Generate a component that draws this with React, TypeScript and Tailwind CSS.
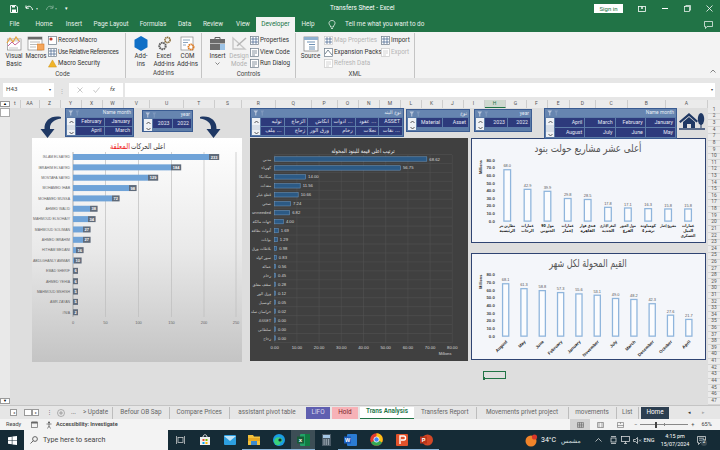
import React from "react";

const F = "font-['Roboto','Noto_Sans',sans-serif]";
const AR = "'DejaVu Sans','Noto Sans',sans-serif";

function Word({ w, children, cls = "" }: { w: number; children?: React.ReactNode; cls?: string }) {
  return (
    <div style={{ width: w }} className={"flex shrink-0 items-center justify-center whitespace-nowrap " + cls}>
      {children}
    </div>
  );
}

/* ---------- small ribbon glyphs ---------- */
function VisualBasicIcon() {
  return (
    <svg width="16" height="15" viewBox="0 0 16 15">
      <rect x="1.5" y="3" width="13.5" height="11" fill="#fff" stroke="#8a8a8a" strokeWidth=".7" />
      <rect x="1.5" y="3" width="13.5" height="2.5" fill="#d9d9d9" />
      <path d="M1 7 L4 2 L7 6 L10 1 L13 5" fill="none" stroke="#e8a33d" strokeWidth="1.2" />
      <path d="M2 10 L6 6 L9 9 L14 5" fill="none" stroke="#c86a9a" strokeWidth="1" />
      <path d="M3 12h9" stroke="#b9b9b9" strokeWidth=".8" />
    </svg>
  );
}
function MacrosIcon() {
  return (
    <svg width="18" height="15" viewBox="0 0 18 15">
      <rect x="1" y="1" width="14" height="13" fill="#fff" stroke="#8a8a8a" strokeWidth=".7" />
      <rect x="1" y="1" width="14" height="2.5" fill="#6a6a6a" />
      <path d="M3 6h10M3 8.5h7M3 11h6" stroke="#a9a9a9" strokeWidth=".8" />
      <rect x="10.5" y="8" width="6.5" height="6" fill="#f5a65b" stroke="#d77a24" strokeWidth=".6" />
    </svg>
  );
}
function GearsIcon() {
  return (
    <svg width="15" height="15" viewBox="0 0 15 15">
      <circle cx="10.5" cy="4" r="2.6" fill="none" stroke="#8a6d3a" strokeWidth="1.6" strokeDasharray="1.4 .5" />
      <circle cx="5.5" cy="10" r="3.2" fill="none" stroke="#5f5f5f" strokeWidth="2" strokeDasharray="1.6 .6" />
    </svg>
  );
}
function ComIcon() {
  return (
    <svg width="16" height="16" viewBox="0 0 16 16">
      <rect x="1" y="1" width="12" height="13" fill="#fff" stroke="#8a8a8a" strokeWidth=".7" />
      <path d="M3 4h7M3 6.5h5M3 9h3" stroke="#6f8fb0" strokeWidth=".8" />
      <circle cx="11" cy="11" r="2.6" fill="none" stroke="#e07a1f" strokeWidth="1.8" strokeDasharray="1.4 .5" />
    </svg>
  );
}
function ToolboxIcon() {
  return (
    <svg width="17" height="15" viewBox="0 0 17 15">
      <path d="M6 3V1.5h5V3" fill="none" stroke="#5f5f5f" />
      <rect x="1" y="3" width="15" height="11" fill="#6a6a6a" />
      <rect x="1" y="7" width="15" height="1" fill="#b9b9b9" />
      <rect x="11" y="8" width="5" height="6" fill="#9cc3e6" />
    </svg>
  );
}
function DesignIcon() {
  return (
    <svg width="17" height="15" viewBox="0 0 17 15">
      <path d="M2 13 L2 2 L14 13 Z" fill="none" stroke="#c7c7c7" strokeWidth="1.4" />
      <path d="M6 10 L15 2" stroke="#b5b5b5" strokeWidth="1.5" />
    </svg>
  );
}
function SourceIcon() {
  return (
    <svg width="18" height="16" viewBox="0 0 18 16">
      <rect x="2" y="1" width="14" height="14" fill="#fff" stroke="#7a7a7a" strokeWidth=".7" />
      <rect x="2" y="1" width="14" height="3" fill="#8fb0d0" />
      <path d="M5 6h8M7 8.5h6M7 11h6M7 13h6" stroke="#5f86ad" strokeWidth=".9" />
    </svg>
  );
}
function Mini({ kind, dim }: { kind: number; dim?: boolean }) {
  const stroke = dim ? "#c9c9c9" : "#6b7a88";
  return (
    <svg width="9" height="9" viewBox="0 0 9 9" className="shrink-0">
      <rect x=".5" y=".5" width="8" height="8" fill="#fff" stroke={stroke} strokeWidth=".7" />
      {kind === 0 && <circle cx="3" cy="3" r="1.6" fill="#c0392b" />}
      {kind === 1 && <path d="M1 3h7M1 6h7M3 1v7M6 1v7" stroke="#3f5f8a" strokeWidth=".7" />}
      {kind === 2 && <path d="M2 3h5M2 5h5M2 7h3" stroke={stroke} strokeWidth=".8" />}
      {kind === 3 && <path d="M1 6 L4 2 L8 7" fill="none" stroke={stroke} strokeWidth=".9" />}
    </svg>
  );
}
function MiniRow({ k, t, dim, cls = "" }: { k: number; t: string; dim?: boolean; cls?: string }) {
  return (
    <div className={"flex h-[11.5px] items-center gap-[1px] whitespace-nowrap " + (dim ? "text-[#b5b5b5] " : "") + cls}>
      {k === 9 ? (
        <svg width="9" height="9" viewBox="0 0 10 9" className="shrink-0">
          <path d="M5 .5 L9.5 8.5 H.5 Z" fill="#f0b429" stroke="#c98a12" strokeWidth=".5" />
        </svg>
      ) : (
        <Mini kind={k} dim={dim} />
      )}
      <span>{t}</span>
    </div>
  );
}
function BigBtn({ icon, a, b, w, dim, cls = "" }: { icon: React.ReactNode; a: string; b?: React.ReactNode; w: number; dim?: boolean; cls?: string }) {
  return (
    <div style={{ width: w }} className={"flex shrink-0 flex-col items-center whitespace-nowrap " + (dim ? "text-[#b0b0b0] " : "") + cls}>
      <div className="flex h-[17px] items-center">{icon}</div>
      <div className="leading-[8px]">{a}</div>
      <div className="leading-[8px]">{b}</div>
    </div>
  );
}
function Group({ w, label, children }: { w: number; label: string; children: React.ReactNode }) {
  return (
    <div style={{ width: w }} className="flex shrink-0 flex-col border-r border-[#c4c4c4]">
      <div className="flex flex-1 pt-[2px]">{children}</div>
      <div className="h-[9px] text-center leading-[9px] text-[#444]">{label}</div>
    </div>
  );
}

function Ribbon() {
  return (
    <div className="flex h-[46px] bg-[#f3f3f3] pt-[1px] text-[6.3px] text-[#333]">
      <Group w={126} label="Code">
        <BigBtn w={28} icon={<VisualBasicIcon />} a="Visual" b="Basic" />
        <BigBtn w={16} icon={<MacrosIcon />} a="Macros" />
        <div className="ml-[4px] flex flex-col">
          <MiniRow k={0} t="Record Macro" />
          <MiniRow k={1} t="Use Relative References" cls="tracking-[-0.3px]" />
          <MiniRow k={9} t="Macro Security" />
        </div>
      </Group>
      <Group w={76} label="Add-ins">
        <BigBtn
          w={26}
          cls="ml-[2px]"
          icon={
            <svg width="14" height="15" viewBox="0 0 14 15">
              <path d="M7 0 L13.5 3.7 V11.3 L7 15 L.5 11.3 V3.7 Z" fill="#0f6fc6" />
            </svg>
          }
          a="Add-"
          b="ins"
        />
        <BigBtn w={20} icon={<GearsIcon />} a="Excel" b="Add-ins" />
        <BigBtn w={21} cls="ml-[3px]" icon={<ComIcon />} a="COM" b="Add-ins" />
      </Group>
      <Group w={94} label="Controls">
        <BigBtn
          w={29}
          cls="ml-[1px]"
          icon={<ToolboxIcon />}
          a="Insert"
          b={
            <svg width="5" height="5" viewBox="0 0 5 5" className="mx-auto mt-[1px]">
              <path d="M.5 1.5 L2.5 3.5 L4.5 1.5" fill="none" stroke="#555" strokeWidth=".7" />
            </svg>
          }
        />
        <BigBtn w={14} dim icon={<DesignIcon />} a="Design" b="Mode" />
        <div className="ml-[4px] flex flex-col">
          <MiniRow k={1} t="Properties" />
          <MiniRow k={2} t="View Code" />
          <MiniRow k={2} t="Run Dialog" />
        </div>
      </Group>
      <Group w={119} label="XML">
        <BigBtn w={27} cls="ml-[1px]" icon={<SourceIcon />} a="Source" />
        <div className="flex w-[57px] flex-col">
          <MiniRow k={1} t="Map Properties" dim />
          <MiniRow k={3} t="Expansion Packs" />
          <MiniRow k={2} t="Refresh Data" dim />
        </div>
        <div className="flex flex-col">
          <MiniRow k={1} t="Import" />
          <MiniRow k={2} t="Export" dim />
        </div>
      </Group>
      <div className="flex flex-1 items-end justify-end pb-[4px] pr-[4px]">
        <svg width="6" height="5" viewBox="0 0 6 5">
          <path d="M.5 3.5 L3 1 L5.5 3.5" fill="none" stroke="#555" strokeWidth=".7" />
        </svg>
      </div>
    </div>
  );
}

/* ---------- slicer ---------- */
function Slicer({
  title,
  w,
  h,
  cols,
  rows,
  cellH = 8,
  cls = "",
  titleAr,
}: {
  title: string;
  w: number;
  h: number;
  cols: number;
  rows: string[][];
  cellH?: number;
  cls?: string;
  titleAr?: boolean;
}) {
  return (
    <div
      style={{ width: w, height: h }}
      className={"relative z-10 flex shrink-0 flex-col border border-[#3b5c92] bg-[#5c7ca8] " + cls}
    >
      <div className="flex flex-1 items-center justify-between bg-[#6685b0] px-[2px] text-[4.9px] text-[#e8edf5]">
        <svg width="13" height="6" viewBox="0 0 13 6">
          <path d="M.5 .5 H5 L3.3 3 V5.5 H2.2 V3 Z" fill="#b7c5da" />
          <path d="M7.5 .5 H11 L9.8 3 V5.5 H8.7 V3 Z" fill="#7f98bd" />
        </svg>
        <span style={titleAr ? { fontFamily: AR } : undefined}>{title}</span>
      </div>
      <div className="flex shrink-0 gap-[1px] p-[1px]">
        <div className="flex w-[8px] shrink-0 flex-col justify-between bg-[#d8dfe8]">
          <div className="flex h-[7px] items-center justify-center bg-[#eef1f5]">
            <svg width="5" height="4" viewBox="0 0 5 4">
              <path d="M.5 3 L2.5 1 L4.5 3" fill="none" stroke="#333" strokeWidth=".8" />
            </svg>
          </div>
          <div className="flex h-[5px] items-center justify-center bg-[#eef1f5]">
            <svg width="5" height="4" viewBox="0 0 5 4">
              <path d="M.5 1 L2.5 3 L4.5 1" fill="none" stroke="#333" strokeWidth=".8" />
            </svg>
          </div>
        </div>
        <div
          style={{ gridTemplateColumns: `repeat(${cols}, minmax(0, 1fr))`, gridAutoRows: cellH }}
          className="grid flex-1 content-start gap-[1px]"
        >
          {rows.flat().map((t, i) => (
            <div
              key={i}
              style={{ fontFamily: /[\u0600-\u06ff]/.test(t) ? AR : undefined }}
              className="flex min-w-0 items-center justify-end overflow-hidden whitespace-nowrap bg-[#2d3a7c] px-[2px] text-[5.2px] leading-none text-[#e4e8f4]"
            >
              {t}
            </div>
          ))}
        </div>
      </div>
    </div>
  );
}

function Arrow({ flip }: { flip?: boolean }) {
  return (
    <svg width="22" height="24" viewBox="0 0 22 24" style={flip ? { transform: "scaleX(-1)" } : undefined} className="shrink-0">
      <path d="M21 2 C12 0 4 5 4.5 14 L0.5 14 L7.5 23 L14.5 14 L10 14 C9.5 8 14 4.5 21 3.5 Z" fill="#1f3864" />
    </svg>
  );
}

/* ---------- charts ---------- */
const leftRows: [string, number, number][] = [
  ["ISLAM ELSAYED", 209, 233],
  ["IBRAHIM ELSAYED", 171, 184],
  ["MOSTAFA SAYED", 148, 129],
  ["MOHAMED IHAB", 129, 98],
  ["MOHAMED MUSSA", 112, 72],
  ["AHMED WALID", 90, 38],
  ["MAHMOUD ELSOHAIY", 88, 34],
  ["MAHMOUD SOLIMAN", 83, 27],
  ["AHMED IBRAHIM", 83, 27],
  ["HITHAM MEDANI", 76, 16],
  ["ABDLGHANLY AMMAR", 74, 10],
  ["EMAD SHERIF", 73, 6],
  ["AHMED YEHIA", 73, 6],
  ["MAHMOUD MSHISH", 73, 5],
  ["AMR ZAYAN", 73, 5],
  ["#N/A", 73, 2],
];
function LeftChart() {
  const grid = [73, 105.5, 138.5, 171.5, 204, 236];
  return (
    <svg width="210" height="224" viewBox="32 138 210 224" className="ml-[22px] shrink-0 bg-gradient-to-b from-white via-[#e9e9e9] to-[#c4c4c4]">
      <text x="120" y="149" textAnchor="middle" fontSize="8" fontFamily={AR} direction="rtl" fill="#e11" textLength="20" lengthAdjust="spacingAndGlyphs">
        المعلقة
      </text>
      <text x="148" y="149" textAnchor="middle" fontSize="8" fontFamily={AR} direction="rtl" fill="#333" textLength="34" lengthAdjust="spacingAndGlyphs">
        اعلى الحركات
      </text>
      {grid.map((x, i) => (
        <g key={x}>
          <line x1={x} x2={x} y1="152" y2="317" stroke={i === 0 ? "#8f8f8f" : "#bdbdbd"} strokeWidth=".7" />
          <text x={x} y="324" textAnchor="middle" fontSize="4" fontFamily="Liberation Sans" fill="#666">
            {i * 50}
          </text>
        </g>
      ))}
      {leftRows.map(([name, end, v], i) => {
        const y = 157 + i * 10.35;
        const lw = String(v).length * 2.6 + 2.4;
        return (
          <g key={name}>
            <text x="70" y={y + 1.3} textAnchor="end" fontSize="3.5" fontFamily="Liberation Sans" fill="#666">
              {name}
            </text>
            <rect x="73" y={y - 3} width={end - 73} height="6" fill="#6fa3d8" />
            <rect x={end} y={y - 3} width={lw} height="6" fill="#5f6b7b" />
            <text x={end + lw / 2} y={y + 1.5} textAnchor="middle" fontSize="4" fontWeight="700" fontFamily="Liberation Sans" fill="#fff">
              {v}
            </text>
          </g>
        );
      })}
    </svg>
  );
}

const midRows: [string, number][] = [
  ["مدني", 68.62],
  ["كهرباء", 56.75],
  ["ميكانيكا", 14.0],
  ["معدات", 11.56],
  ["قطع غيار", 10.66],
  ["صحي", 7.24],
  ["unneeded", 6.82],
  ["جهات مالكة", 4.0],
  ["أدوات نظافة", 1.69],
  ["بوابات", 1.29],
  ["بلاطات ورق", 0.98],
  ["سور كولد", 0.83],
  ["عمالة", 0.56],
  ["رخام", 0.45],
  ["سقف معلق", 0.28],
  ["ورق الور", 0.12],
  ["كونسيل", 0.05],
  ["خراسان صلد", 0.02],
  ["ASSET", 0.0],
  ["سلطانى", 0.0],
  ["زجاج", 0.0],
];
function MidChart() {
  return (
    <svg width="218" height="223" viewBox="250 138 218 223" className="ml-[8px] shrink-0 bg-[#404040]">
      <text x="363" y="153" textAnchor="middle" fontSize="6" fontFamily={AR} direction="rtl" fill="#eee" textLength="63" lengthAdjust="spacingAndGlyphs">
        ترتيب اعلى قيمة للبنود المحولة
      </text>
      {Array.from({ length: 22 }).map((_, i) => (
        <line key={i} x1="274.5" x2="452" y1={154.5 + i * 8.95} y2={154.5 + i * 8.95} stroke="#555" strokeWidth=".5" />
      ))}
      {Array.from({ length: 9 }).map((_, i) => {
        const x = 274.7 + i * 22.2;
        return (
          <g key={i}>
            <line x1={x} x2={x} y1="155" y2="343" stroke="#555" strokeWidth=".5" />
            <text x={x} y="349" textAnchor="middle" fontSize="4.2" fontFamily="Liberation Sans" fill="#d8d8d8">
              {(i * 10).toFixed(2)}
            </text>
          </g>
        );
      })}
      <text x="445" y="355" textAnchor="middle" fontSize="3.8" fontFamily="Liberation Sans" fill="#d8d8d8">
        Millions
      </text>
      {midRows.map(([n, v], i) => {
        const y = 159 + i * 8.95;
        const w = Math.max(v * 2.22, 1);
        return (
          <g key={i}>
            <text x="271" y={y + 1.5} textAnchor="end" fontSize="3.8" fontFamily={AR} fill="#d0d0d0">
              {n}
            </text>
            <rect x="274.5" y={y - 2.2} width={w} height="4.4" fill="#2c5a85" stroke="#6f9cc7" strokeWidth=".5" />
            <text x={274.5 + w + 2.5} y={y + 1.5} fontSize="4.2" fontFamily="Liberation Sans" fill="#d8d8d8">
              {v.toFixed(2)}
            </text>
          </g>
        );
      })}
    </svg>
  );
}

function ColChart({
  title,
  titleW,
  w,
  h,
  originY,
  y80,
  y0,
  bars,
  barW,
}: {
  title: string;
  titleW: number;
  w: number;
  h: number;
  originY: number;
  y80: number;
  y0: number;
  barW: number;
  bars: { x: number; top: number; v: string; lab: string[]; rot?: boolean }[];
}) {
  return (
    <svg width={w} height={h} viewBox={`471 ${originY} ${w} ${h}`} className="shrink-0 border border-[#2f4472] bg-[#f4f6fa]">
      <text x="588" y={originY + 13.5} textAnchor="middle" fontSize="11" fontFamily={AR} direction="rtl" fill="#555" textLength={titleW} lengthAdjust="spacingAndGlyphs">
        {title}
      </text>
      <text x="0" y="0" transform={`translate(480 ${y80 + 14}) rotate(-90)`} fontSize="3.8" fontWeight="700" fontFamily="Liberation Sans" fill="#222">
        Millions
      </text>
      {Array.from({ length: 9 }).map((_, i) => (
        <text key={i} x="493" y={y0 - (i * (y0 - y80)) / 8 + 1.5} textAnchor="end" fontSize="4.4" fontWeight="700" fontFamily="Liberation Sans" fill="#444">
          {(i * 10).toFixed(1)}
        </text>
      ))}
      {bars.map((b, i) => (
        <g key={i}>
          <rect x={b.x + 0.6} y={b.top} width={barW - 1.2} height={y0 - b.top} fill="#fbfcfe" stroke="#8fb5dc" strokeWidth="1.3" />
          <text x={b.x + barW / 2} y={b.top - 2.5} textAnchor="middle" fontSize="4" fontFamily="Liberation Sans" fill="#555">
            {b.v}
          </text>
          {b.rot ? (
            <text
              transform={`translate(${b.x + barW / 2 + 2} ${y0 + 6}) rotate(-45)`}
              textAnchor="end"
              fontSize="4.4"
              fontWeight="700"
              fontFamily="Liberation Sans"
              fill="#222"
            >
              {b.lab[0]}
            </text>
          ) : (
            b.lab.map((l, j) => (
              <text
                key={j}
                x={b.x + barW / 2}
                y={y0 + 6.5 + j * 5}
                textAnchor="middle"
                fontSize="4.2"
                fontWeight="700"
                fontFamily={AR}
                direction="rtl"
                fill="#222"
                textLength={Math.min(16, l.length * 2.1)}
                lengthAdjust="spacingAndGlyphs"
              >
                {l}
              </text>
            ))
          )}
        </g>
      ))}
    </svg>
  );
}

const top10 = [
  [95, 103, "68.0", ["مطارين بتر", "الرئيسية"]],
  [157, 163, "42.9", ["عمارات", "الرحاب"]],
  [218, 169, "39.9", ["مول 90", "الجنوبي"]],
  [280, 191, "29.8", ["عمارات", "إعمار"]],
  [341, 194, "28.5", ["فندق فوار", "القاهرة"]],
  [403, 218, "17.8", ["المقر الإداري", "الجديد"]],
  [464, 220, "17.1", ["مول العبور", "الفرع"]],
  [526, 222, "16.3", ["كومباوند", "ترشم 4"]],
  [587, 223, "15.8", ["مشروع إعمار"]],
  [648, 223, "15.8", ["عمارات", "النيل", "العسكري"]],
] as [number, number, string, string[]][];

const months = [
  [91, 100, "68.1", "August"],
  [147, 115, "61.3", "May"],
  [203, 121, "58.8", "June"],
  [259, 127, "57.3", "February"],
  [315, 131, "55.6", "January"],
  [371, 135, "53.1", "November"],
  [427, 145, "49.0", "July"],
  [483, 148, "48.2", "March"],
  [539, 161, "42.3", "December"],
  [595, 196, "27.6", "October"],
  [651, 209, "21.7", "April"],
] as [number, number, string, string][];

/* ---------- headers ---------- */
const colLetters: [string, number][] = [
  ["t", 12], ["AA", 29], ["Z", 50], ["Y", 71], ["X", 92], ["W", 113], ["V", 134], ["U", 166], ["T", 202], ["S", 227],
  ["R", 256], ["Q", 296], ["P", 327], ["O", 348], ["N", 369], ["M", 391], ["L", 411], ["K", 432], ["J", 453], ["I", 474],
  ["H", 495], ["G", 516], ["F", 537], ["E", 558], ["D", 582], ["C", 610], ["B", 645], ["A", 687],
];

function ColumnHeader() {
  const edges: number[] = [10];
  colLetters.forEach((c, i) => {
    if (i > 0) edges.push((colLetters[i - 1][1] + c[1]) / 2);
  });
  edges.push(708);
  return (
    <div className="flex h-[8px] bg-[#ebebeb] text-[5px] text-[#555]">
      {colLetters.map(([l], i) => (
        <div
          key={l}
          style={{ width: edges[i + 1] - edges[i] }}
          className={
            "flex shrink-0 items-center justify-center border-r border-[#cdcdcd] " +
            (l === "H" ? "border-b border-b-[#217346] bg-[#cfd9cf] text-[#217346]" : "")
          }
        >
          {l}
        </div>
      ))}
    </div>
  );
}
function RowHeader() {
  const nums = [1, 2, 3];
  const rest = Array.from({ length: 41 }).map((_, i) => i + 7);
  return (
    <div className="flex w-[12px] shrink-0 flex-col overflow-hidden bg-[#ebebeb] pt-[8px] text-center text-[4.8px] leading-none text-[#555]">
      {nums.map((n) => (
        <div key={n} className="flex h-[6.2px] shrink-0 items-center justify-center border-b border-[#d4d4d4]">
          {n}
        </div>
      ))}
      <div className="flex h-[7.4px] shrink-0 items-end justify-center border-b border-[#d4d4d4]">4</div>
      {rest.map((n) => (
        <div key={n} className="flex h-[6.62px] shrink-0 items-center justify-center border-b border-[#d4d4d4]">
          {n}
        </div>
      ))}
    </div>
  );
}

/* ---------- taskbar glyphs ---------- */
function Tb({ w, active, u, children }: { w: number; active?: boolean; u?: boolean; children: React.ReactNode }) {
  return (
    <div
      style={{ width: w }}
      className={
        "flex h-full shrink-0 items-center justify-center " +
        (active ? "bg-[#3d4e56] " : "") +
        (u ? "border-b border-b-[#8ab4d8]" : "")
      }
    >
      {children}
    </div>
  );
}

function SheetTab({ w, children, cls = "", sep = true }: { w: number; children: React.ReactNode; cls?: string; sep?: boolean }) {
  return (
    <div style={{ width: w }} className={"flex h-[12px] shrink-0 items-center justify-center whitespace-nowrap " + (sep ? "border-r border-[#bdbdbd] " : "") + cls}>
      {children}
    </div>
  );
}

export default function App() {
  return (
    <div className={"flex h-[450px] w-[720px] flex-col overflow-hidden bg-[#e6e6e6] " + F}>
      {/* title bar */}
      <div className="flex h-[17px] items-center bg-[#217346] text-white">
        <div className="ml-[10px] flex w-[70px] items-center">
          <svg width="8" height="8" viewBox="0 0 8 8">
            <path d="M.5 .5 H6 L7.5 2 V7.5 H.5 Z" fill="none" stroke="#fff" strokeWidth=".9" />
            <rect x="2" y="4.5" width="4" height="3" fill="#fff" />
            <rect x="2" y="1" width="3" height="1.5" fill="#fff" />
          </svg>
          <svg width="10" height="8" viewBox="0 0 10 8" className="ml-[7px]">
            <path d="M1 3 C3 0 7 1 7.5 5 M1 .5 V3.2 H3.8" fill="none" stroke="#fff" strokeWidth="1" />
          </svg>
          <span className="ml-[1px] text-[4px] opacity-70">▾</span>
          <svg width="10" height="8" viewBox="0 0 10 8" className="ml-[6px] opacity-40">
            <path d="M9 3 C7 0 3 1 2.5 5 M9 .5 V3.2 H6.2" fill="none" stroke="#fff" strokeWidth="1" />
          </svg>
          <span className="ml-[1px] text-[4px] opacity-40">▾</span>
          <span className="ml-[8px] text-[5px]">▾</span>
        </div>
        <div className="ml-[250px] w-[70px] whitespace-nowrap text-[6.4px]">Transfers Sheet  -  Excel</div>
        <div className="ml-[194px] flex h-[9px] w-[29px] items-center justify-center bg-white text-[6px] text-[#217346]">Sign in</div>
        <div className="ml-[7px] flex w-[24px] justify-center">
          <svg width="8" height="6" viewBox="0 0 8 6">
            <rect x=".5" y=".5" width="7" height="5" fill="none" stroke="#fff" strokeWidth=".8" />
            <path d="M4 .5 V3" stroke="#fff" strokeWidth="1.4" />
          </svg>
        </div>
        <div className="flex w-[22px] justify-center">
          <div className="h-px w-[6px] bg-white" />
        </div>
        <div className="flex w-[22px] justify-center">
          <svg width="7" height="7" viewBox="0 0 7 7">
            <rect x=".5" y="1.5" width="5" height="5" fill="none" stroke="#fff" strokeWidth=".7" />
            <path d="M1.8 1.5 V.5 H6.5 V5.2 H5.5" fill="none" stroke="#fff" strokeWidth=".7" />
          </svg>
        </div>
        <div className="flex w-[22px] justify-center">
          <svg width="7" height="7" viewBox="0 0 7 7">
            <path d="M.5 .5 L6.5 6.5 M6.5 .5 L.5 6.5" stroke="#fff" strokeWidth=".8" />
          </svg>
        </div>
      </div>

      {/* tab row */}
      <div className="flex h-[15px] items-center bg-[#217346] text-[6.4px] text-[#e6f0ea]">
        <Word w={29}>File</Word>
        <Word w={30}>Home</Word>
        <Word w={30}>Insert</Word>
        <Word w={44}>Page Layout</Word>
        <Word w={40}>Formulas</Word>
        <Word w={23}>Data</Word>
        <Word w={34}>Review</Word>
        <Word w={26}>View</Word>
        <Word w={39} cls="h-full bg-[#f3f3f3] text-[#217346]">Developer</Word>
        <Word w={26}>Help</Word>
        <svg width="8" height="9" viewBox="0 0 8 9" className="ml-[7px]">
          <path d="M2.5 6 C-.5 3 1.5 .5 4 .5 C6.5 .5 8.5 3 5.5 6 V7 H2.5 Z M3 8.5 H5" fill="none" stroke="#fff" strokeWidth=".7" />
        </svg>
        <span className="ml-[9px] w-[75px] whitespace-nowrap">Tell me what you want to do</span>
        <svg width="9" height="8" viewBox="0 0 9 8" className="ml-[284px]">
          <path d="M.5 .5 H8.5 V5.5 H3 L1.5 7.5 V5.5 H.5 Z" fill="none" stroke="#fff" strokeWidth=".7" />
        </svg>
      </div>

      <Ribbon />

      {/* formula bar */}
      <div className="flex h-[22px] items-start bg-[#e6e6e6] pl-[3px] pr-[5px] pt-[5px] text-[6.2px] text-[#444]">
        <div className="flex h-[14px] w-[51px] items-center justify-between bg-white px-[3px]">
          <span>H43</span>
          <span className="text-[4px]">▾</span>
        </div>
        <div className="flex h-[14px] w-[15px] items-center justify-center text-[6px] text-[#aaa]">⋮</div>
        <div className="flex h-[14px] w-[54px] items-center justify-around bg-white px-[3px]">
          <svg width="6" height="6" viewBox="0 0 6 6"><path d="M.5 .5 L5.5 5.5 M5.5 .5 L.5 5.5" stroke="#bbb" strokeWidth=".8" /></svg>
          <svg width="7" height="6" viewBox="0 0 7 6"><path d="M.5 3 L2.5 5.5 L6.5 .5" fill="none" stroke="#bbb" strokeWidth=".8" /></svg>
          <span className="italic">fx</span>
        </div>
        <div className="ml-[2px] flex h-[14px] flex-1 items-center justify-end bg-white pr-[2px] text-[4px]">▾</div>
      </div>

      {/* sheet */}
      <div className="flex h-[305px] shrink-0">
        <div className="flex w-[10px] shrink-0 flex-col justify-between bg-[#e9e9e9]">
          <div>
            <div className="mt-[1px] flex h-[6px] items-center justify-center border border-[#999] bg-white text-[4px]">▲</div>
            <div className="mt-[1px] h-[9px] border border-[#aaa] bg-white" />
          </div>
          <div className="mb-[1px] flex h-[6px] items-center justify-center border border-[#999] bg-white text-[4px]">▼</div>
        </div>
        <div className="flex w-[698px] shrink-0 flex-col">
          <ColumnHeader />
          <div className="relative flex-1 bg-[#dedede]">
            {/* slicer row */}
            <div className="flex h-[30px] items-start">
              <div className="ml-[30px] mt-[7px]"><Arrow /></div>
              <Slicer
                cls="ml-[3px]"
                title="Name month"
                w={69}
                h={29}
                cols={2}
                rows={[["February", "January"], ["April", "March"]]}
              />
              <Slicer cls="ml-[8px] mt-[2px]" title="year" w={51} h={22} cols={2} cellH={9} rows={[["2023", "2022"]]} />
              <div className="ml-[6px] mt-[7px]"><Arrow flip /></div>
              <Slicer
                cls="ml-[29px]"
                title="نوع البند"
                titleAr
                w={154}
                h={29}
                cols={6}
                rows={[
                  ["توليه", "الزجاج", "انكاش", "ادوات ...", "عقود ...", "ASSET"],
                  ["ملف ...", "زجاج", "ورق الور", "رخام", "نجلات", "نقات ..."],
                ]}
              />
              <Slicer cls="ml-[2px] mt-[1px]" title="نوع" titleAr w={64} h={23} cols={2} cellH={9} rows={[["Material", "Asset"]]} />
              <Slicer cls="ml-[4px] mt-[1px]" title="year" w={58} h={23} cols={2} cellH={9} rows={[["2023", "2022"]]} />
              <Slicer
                cls="ml-[12px]"
                title="Name month"
                w={133}
                h={31}
                cols={4}
                cellH={9}
                rows={[
                  ["April", "March", "February", "January"],
                  ["August", "July", "June", "May"],
                ]}
              />
              <svg width="26" height="18" viewBox="0 0 26 18" className="ml-[2px] mt-[4px] shrink-0">
                <path d="M0 9.5 L10 1 L19 9 L17.5 10.5 L10 4 L1.5 11 Z" fill="#1f3864" />
                <path d="M4 10 L10 5 L16 10 V16 H12 V12 H8 V16 H4 Z" fill="#1f3864" />
                <ellipse cx="22" cy="7" rx="3.2" ry="6" fill="#1f3864" />
                <rect x="21.5" y="11" width="1" height="5" fill="#1f3864" />
                <rect x="0" y="16.3" width="26" height="1.4" fill="#1f3864" />
              </svg>
            </div>
            {/* chart row */}
            <div className="flex items-start">
              <LeftChart />
              <MidChart />
              <div className="ml-[3px] flex flex-col gap-[10px]">
                <ColChart
                  title="أعلى عشر مشاريع حولت بنود"
                  titleW={109}
                  w={235}
                  h={105}
                  originY={138}
                  y80={159.7}
                  y0={221.7}
                  barW={8}
                  bars={top10.map(([x, t, v, lab]) => ({ x: 470 + x / 3, top: 135 + t / 3, v, lab }))}
                />
                <ColChart
                  title="القيم المحولة لكل شهر"
                  titleW={79}
                  w={235}
                  h={107}
                  originY={253}
                  y80={274.3}
                  y0={336.7}
                  barW={7.5}
                  bars={months.map(([x, t, v, m]) => ({ x: 470 + x / 3, top: 250 + t / 3, v, lab: [m], rot: true }))}
                />
              </div>
            </div>
            {/* selected cell */}
            <div className="absolute left-[473px] top-[263px] h-[8px] w-[23px] border border-[#217346]">
              <div className="absolute -bottom-[1.5px] -left-[1.5px] h-[2.5px] w-[2.5px] bg-[#217346]" />
            </div>
          </div>
        </div>
        <RowHeader />
      </div>

      {/* sheet tabs */}
      <div className="flex h-[14px] items-center border-t border-[#c4c4c4] bg-[#e6e6e6] text-[6.4px] text-[#666]">
        <div className="ml-[10px] flex h-[7px] w-[7px] items-center justify-center border border-[#999] bg-white text-[4px]">◂</div>
        <div className="ml-[7px] h-[7px] w-[8px] border border-[#999] bg-white" />
        <div className="flex h-[7px] w-[7px] items-center justify-center border border-[#999] bg-white text-[4px]">▸</div>
        <div className="ml-[8px] w-[1px] text-[5px]">⋮</div>
        <svg width="8" height="8" viewBox="0 0 8 8" className="ml-[9px]">
          <circle cx="4" cy="4" r="3.5" fill="none" stroke="#888" strokeWidth=".6" />
          <path d="M4 2 V6 M2 4 H6" stroke="#888" strokeWidth=".7" />
        </svg>
        <span className="ml-[6px] w-[8px]">...</span>
        <SheetTab w={34}>&gt; Update</SheetTab>
        <SheetTab w={57}>Befour OB Sap</SheetTab>
        <SheetTab w={59.5}>Compare Prices</SheetTab>
        <SheetTab w={75} sep={false}>assistant pivot table</SheetTab>
        <SheetTab w={24} sep={false} cls="ml-[1.5px] bg-[#5f5fb0] text-[#dde]">LIFO</SheetTab>
        <SheetTab w={26} sep={false} cls="ml-[2px] bg-[#f7b2b7] text-[#7a1f28]">Hold</SheetTab>
        <SheetTab w={54} sep={false} cls="ml-[2px] border-b border-b-[#217346] bg-white font-semibold text-[#217346]">Trans Analysis</SheetTab>
        <SheetTab w={62.5}>Transfers Report</SheetTab>
        <SheetTab w={92}>Movements privet project</SheetTab>
        <SheetTab w={48}>movements</SheetTab>
        <SheetTab w={22.5}>List</SheetTab>
        <SheetTab w={28} sep={false} cls="ml-[2px] bg-[#2c3e50] text-white">Home</SheetTab>
        <span className="ml-[19px] text-[5px] text-[#333]">◂</span>
        <span className="ml-[11px] text-[5px] text-[#aaa]">▸</span>
      </div>

      {/* status bar */}
      <div className="flex h-[11px] items-center bg-[#f3f3f3] text-[5.6px] text-[#444]">
        <span className="ml-[6px] w-[24px]">Ready</span>
        <svg width="7" height="7" viewBox="0 0 7 7" className="ml-[1px]">
          <rect x=".5" y="1.5" width="6" height="5" fill="none" stroke="#666" strokeWidth=".7" />
          <rect x=".5" y=".5" width="6" height="2" fill="#666" />
        </svg>
        <svg width="8" height="8" viewBox="0 0 8 8" className="ml-[8px]">
          <circle cx="3" cy="1.5" r="1" fill="#555" />
          <path d="M.5 3 H5.5 M3 3 V5 L1.5 7.5 M3 5 L4.5 7.5" fill="none" stroke="#555" strokeWidth=".7" />
        </svg>
        <span className="ml-[2px] w-[120px] whitespace-nowrap text-[5.5px] font-semibold">Accessibility: Investigate</span>
        <div className="ml-[394px] flex h-full w-[20px] items-center justify-center bg-[#d2d2d2]">
          <svg width="7" height="6" viewBox="0 0 7 6"><path d="M.5 .5 H6.5 V5.5 H.5 Z M.5 2.2 H6.5 M.5 3.9 H6.5 M2.5 .5 V5.5 M4.5 .5 V5.5" fill="none" stroke="#555" strokeWidth=".5" /></svg>
        </div>
        <div className="flex w-[20px] justify-center">
          <svg width="7" height="6" viewBox="0 0 7 6"><path d="M.5 .5 H6.5 V5.5 H.5 Z M2 .5 V5.5 M5 .5 V5.5" fill="none" stroke="#555" strokeWidth=".5" /></svg>
        </div>
        <div className="flex w-[20px] justify-center">
          <svg width="7" height="6" viewBox="0 0 7 6"><path d="M.5 .5 H6.5 V5.5 H.5 Z M.5 3.5 H6.5 M3.5 .5 V2" fill="none" stroke="#555" strokeWidth=".5" /></svg>
        </div>
        <span className="ml-[4px]">−</span>
        <div className="relative ml-[3px] h-px w-[48px] bg-[#888]">
          <div className="absolute left-[15px] top-[-2.5px] h-[6px] w-[2px] bg-[#444]" />
          <div className="absolute left-[24px] top-[-1px] h-[3px] w-px bg-[#888]" />
        </div>
        <span className="ml-[3px]">+</span>
        <span className="ml-[7px]">65%</span>
      </div>

      {/* taskbar */}
      <div className="flex h-[20px] items-center bg-[#152b36] text-white">
        <Tb w={24}>
          <svg width="9" height="9" viewBox="0 0 9 9">
            <path d="M0 1.3 L3.8 .7 V4.2 H0 Z M4.4 .6 L9 0 V4.2 H4.4 Z M0 4.8 H3.8 V8.3 L0 7.7 Z M4.4 4.8 H9 V9 L4.4 8.4 Z" fill="#fff" />
          </svg>
        </Tb>
        <div className="flex h-full w-[144px] items-center bg-[#f3f3f3] text-[7.2px] text-[#444]">
          <svg width="8" height="8" viewBox="0 0 8 8" className="ml-[6px]">
            <circle cx="5" cy="3" r="2.4" fill="none" stroke="#444" strokeWidth=".8" />
            <path d="M3.2 4.8 L.5 7.5" stroke="#444" strokeWidth=".8" />
          </svg>
          <span className="ml-[5px] whitespace-nowrap">Type here to search</span>
        </div>
        <Tb w={24}>
          <svg width="9" height="8" viewBox="0 0 9 8"><rect x="2" y="1.5" width="5" height="5" fill="none" stroke="#ddd" strokeWidth=".7" /><path d="M.5 0 V8 M8.5 0 V8" stroke="#ddd" strokeWidth=".7" /></svg>
        </Tb>
        <Tb w={25}>
          <svg width="12" height="12" viewBox="0 0 12 12"><path d="M1 3 H11 V11 H1 Z" fill="#f0f0f0" /><path d="M4 3 C4 0 8 0 8 3" fill="none" stroke="#ddd" /><rect x="3.5" y="5" width="2" height="2" fill="#e94f2e" /><rect x="6.5" y="5" width="2" height="2" fill="#7fba00" /><rect x="3.5" y="8" width="2" height="2" fill="#00a4ef" /><rect x="6.5" y="8" width="2" height="2" fill="#ffb900" /></svg>
        </Tb>
        <Tb w={25}>
          <svg width="12" height="10" viewBox="0 0 12 10"><rect width="12" height="10" rx="1" fill="#2d9fe0" /><path d="M0 1 L6 6 L12 1 Z" fill="#bfe3f7" /></svg>
        </Tb>
        <Tb w={24} u>
          <svg width="12" height="10" viewBox="0 0 12 10"><path d="M0 0 H5 L6 1.5 H12 V10 H0 Z" fill="#f2c13c" /><rect y="3" width="12" height="3" fill="#e5a823" /><rect x="3" y="6" width="6" height="4" fill="#3a8ad0" /></svg>
        </Tb>
        <Tb w={25} u>
          <svg width="12" height="12" viewBox="0 0 12 12"><circle cx="6" cy="6" r="6" fill="#1b9de2" /><path d="M1 8 C1 4 5 2 8 4 C11 6 9 9 7 8.5 C8 11 4 12 2.5 10.5" fill="#3bd27a" /><circle cx="7" cy="6" r="1.6" fill="#152b36" /></svg>
        </Tb>
        <Tb w={24} active u>
          <svg width="13" height="12" viewBox="0 0 13 12"><rect x="3" width="10" height="12" rx="1" fill="#21a366" /><rect x="8" width="5" height="12" fill="#107c41" /><rect y="2.5" width="7" height="7" fill="#185c37" /><text x="3.5" y="8" textAnchor="middle" fontSize="6" fontWeight="700" fill="#fff" fontFamily="Liberation Sans">x</text></svg>
        </Tb>
        <Tb w={23}>
          <svg width="9" height="12" viewBox="0 0 9 12"><rect width="9" height="12" fill="#4a5a66" /><rect x="1" y="1" width="7" height="3" fill="#a5c8e6" /><path d="M1.5 6 H7.5 M1.5 8 H7.5 M1.5 10 H7.5" stroke="#dce6ee" strokeDasharray="1.2 1" /></svg>
        </Tb>
        <Tb w={24} u>
          <svg width="13" height="12" viewBox="0 0 13 12"><rect x="3" width="10" height="12" rx="1" fill="#2b7cd3" /><rect y="2.5" width="7" height="7" fill="#185abd" /><text x="3.5" y="8" textAnchor="middle" fontSize="5.5" fontWeight="700" fill="#fff" fontFamily="Liberation Sans">W</text></svg>
        </Tb>
        <Tb w={28} u>
          <svg width="13" height="13" viewBox="0 0 13 13"><circle cx="6.5" cy="6.5" r="6.3" fill="#e33b2e" /><path d="M6.5 .2 A6.3 6.3 0 0 1 12 9.5 L6.5 6.5 Z" fill="#fbc116" /><path d="M12 9.5 A6.3 6.3 0 0 1 1 9.5 L6.5 6.5 Z" fill="#34a853" /><circle cx="6.5" cy="6.5" r="2.6" fill="#4285f4" stroke="#fff" strokeWidth=".8" /></svg>
        </Tb>
        <Tb w={24} u>
          <svg width="12" height="12" viewBox="0 0 12 12"><rect width="12" height="12" rx="1" fill="#e2532b" /><path d="M4 10 V2 H8 C10 2 10 6 8 6 H5" fill="none" stroke="#fff" strokeWidth="1.4" /></svg>
        </Tb>
        <Tb w={25} u>
          <svg width="13" height="12" viewBox="0 0 13 12"><circle cx="7.5" cy="6" r="5.5" fill="#d24726" /><rect y="2.5" width="7" height="7" fill="#b7341a" /><text x="3.5" y="8" textAnchor="middle" fontSize="5.5" fontWeight="700" fill="#fff" fontFamily="Liberation Sans">P</text></svg>
        </Tb>
        <svg width="13" height="13" viewBox="0 0 13 13" className="ml-[86px]">
          <circle cx="6" cy="7" r="5.5" fill="#f0842a" />
          <circle cx="9.5" cy="3" r="2.6" fill="#d9372a" />
        </svg>
        <span className="ml-[3px] w-[20px] whitespace-nowrap text-[7px]">34°C</span>
        <span style={{ fontFamily: AR }} className="w-[24px] whitespace-nowrap text-[6px] text-[#dfe5e8]">مشمس</span>
        <span className="ml-[10px] w-[12px] text-[7px]">
          <svg width="7" height="4" viewBox="0 0 7 4"><path d="M.5 3.5 L3.5 .5 L6.5 3.5" fill="none" stroke="#eee" strokeWidth=".7" /></svg>
        </span>
        <div className="flex w-[12px] justify-center">
          <svg width="7" height="8" viewBox="0 0 7 8"><path d="M1 .5 H6 M1 7.5 H6" stroke="#eee" strokeWidth=".7" /><rect x="1" y="2" width="5" height="4" fill="none" stroke="#eee" strokeWidth=".7" /></svg>
        </div>
        <div className="flex w-[12px] justify-center">
          <svg width="9" height="8" viewBox="0 0 9 8"><rect x=".5" y=".5" width="8" height="5" fill="none" stroke="#eee" strokeWidth=".7" /><path d="M3 7.5 H6 M4.5 5.5 V7.5" stroke="#eee" strokeWidth=".7" /></svg>
        </div>
        <div className="flex w-[12px] justify-center">
          <svg width="9" height="7" viewBox="0 0 9 7"><path d="M.5 2.5 H2.5 L4.5 .5 V6.5 L2.5 4.5 H.5 Z" fill="none" stroke="#eee" strokeWidth=".7" /><path d="M6 2.5 L8 4.5 M8 2.5 L6 4.5" stroke="#eee" strokeWidth=".6" /></svg>
        </div>
        <span className="w-[12px] text-center text-[5.6px]">ENG</span>
        <div className="ml-[4px] flex w-[32px] flex-col items-center whitespace-nowrap text-[5.4px] leading-[8px]">
          <span>4:15 pm</span>
          <span>15/07/2024</span>
        </div>
        <div className="relative ml-[6px]">
          <svg width="9" height="9" viewBox="0 0 9 9"><path d="M.5 .5 H8.5 V6.5 H3.5 L1.5 8.5 V6.5 H.5 Z M2 2.2 H7 M2 4.2 H7" fill="none" stroke="#eee" strokeWidth=".7" /></svg>
          <span className="absolute left-[4px] top-[4px] flex h-[6px] w-[6px] items-center justify-center rounded-full bg-[#3a4a52] text-[4.5px]">2</span>
        </div>
      </div>
    </div>
  );
}
